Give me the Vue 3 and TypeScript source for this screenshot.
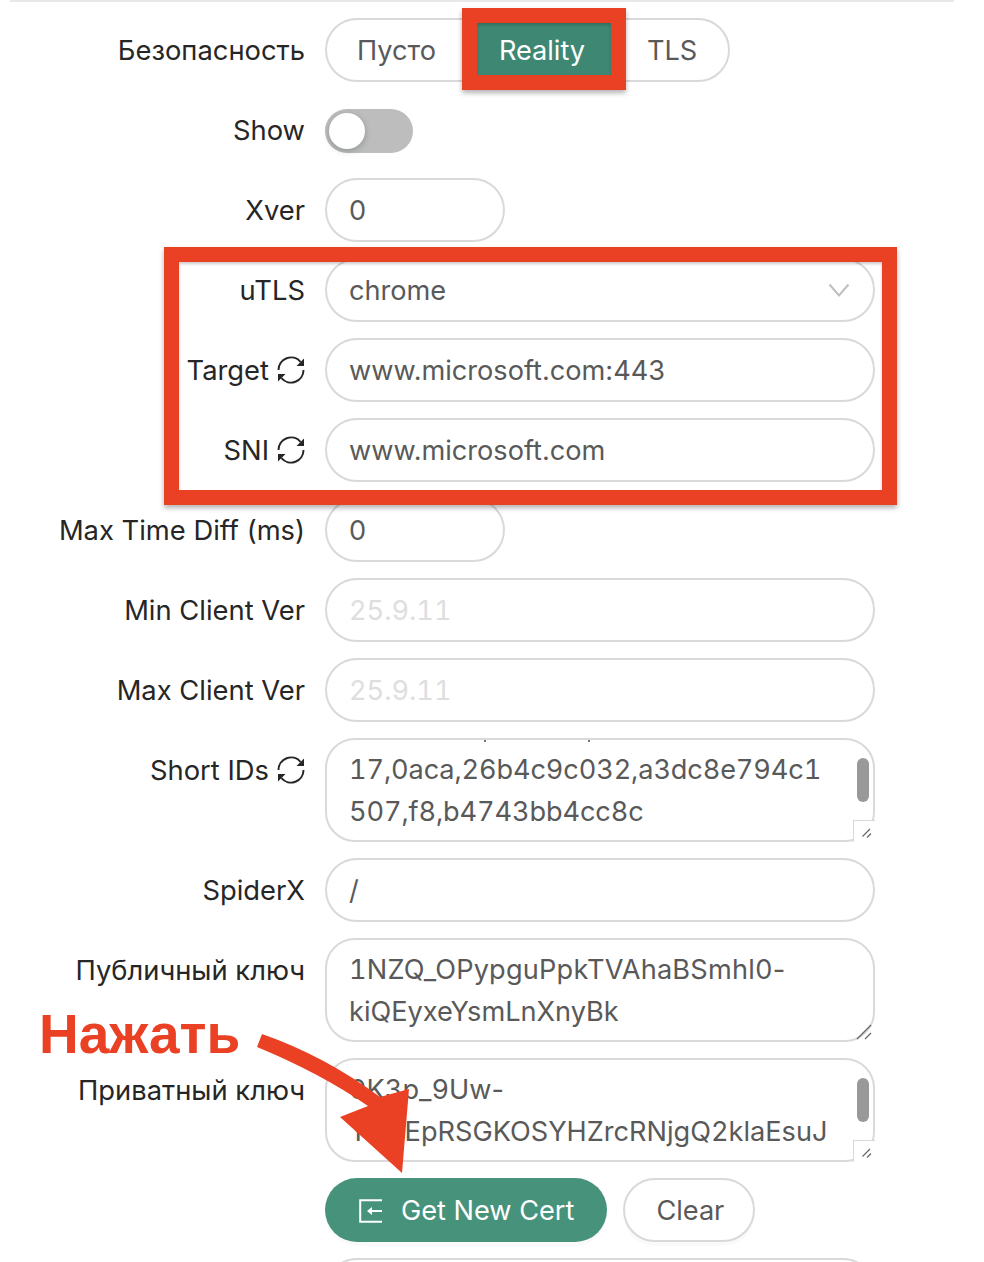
<script setup lang="ts">
const arcs = 'M1.5 14A12.5 12.5 0 0 1 23.5 5.8M26.5 14A12.5 12.5 0 0 1 4.5 22.2'
const heads = 'M27 2.5V10h-7.5zM1 25.5V18h7.5z'
</script>

<template>
  <div class="page">
    <div class="divider"></div>
    <form class="form" @submit.prevent>
      <div class="row">
        <label class="label">Безопасность</label>
        <div class="radio">
          <span class="opt">Пусто</span>
          <span class="opt active">Reality</span>
          <span class="opt">TLS</span>
        </div>
      </div>
      <div class="row switch-row">
        <label class="label">Show</label>
        <span class="switch"><i class="knob"></i></span>
      </div>
      <div class="row">
        <label class="label">Xver</label>
        <div class="field short">0</div>
      </div>
      <div class="row">
        <label class="label">uTLS</label>
        <div class="field select">
          chrome
          <svg class="chev" viewBox="0 0 22 14" width="22" height="14"><path d="M1.5 1.5 11 12.5 20.5 1.5" fill="none" stroke="#bfbfbf" stroke-width="2"/></svg>
        </div>
      </div>
      <div class="row">
        <label class="label">Target
          <svg class="sync" viewBox="0 0 28 28"><path :d="arcs" fill="none" stroke="#262626" stroke-width="2"/><path :d="heads" fill="#262626"/></svg>
        </label>
        <div class="field">www.microsoft.com:443</div>
      </div>
      <div class="row">
        <label class="label">SNI
          <svg class="sync" viewBox="0 0 28 28"><path :d="arcs" fill="none" stroke="#262626" stroke-width="2"/><path :d="heads" fill="#262626"/></svg>
        </label>
        <div class="field">www.microsoft.com</div>
      </div>
      <div class="row">
        <label class="label">Max Time Diff (ms)</label>
        <div class="field short">0</div>
      </div>
      <div class="row">
        <label class="label">Min Client Ver</label>
        <div class="field ph">25.9.11</div>
      </div>
      <div class="row">
        <label class="label">Max Client Ver</label>
        <div class="field ph">25.9.11</div>
      </div>
      <div class="row">
        <label class="label">Short IDs
          <svg class="sync" viewBox="0 0 28 28"><path :d="arcs" fill="none" stroke="#262626" stroke-width="2"/><path :d="heads" fill="#262626"/></svg>
        </label>
        <div class="area scroll">
          <i class="tick tick-a"></i>
          <i class="tick tick-b"></i>
          <div class="line tight">17,0aca,26b4c9c032,a3dc8e794c1</div>
          <div class="line tight">507,f8,b4743bb4cc8c</div>
          <i class="thumb"></i>
          <i class="notch"></i>
          <svg class="grip" viewBox="0 0 10 10" width="10" height="10"><path d="M.5 8.5 8 1M5 9.5l4-4" stroke="#666" stroke-width="1.2"/></svg>
        </div>
      </div>
      <div class="row">
        <label class="label">SpiderX</label>
        <div class="field">/</div>
      </div>
      <div class="row">
        <label class="label">Публичный ключ</label>
        <div class="area">
          <div class="line loose">1NZQ_OPypguPpkTVAhaBSmhl0<span class="dash">-</span></div>
          <div class="line">kiQEyxeYsmLnXnyBk</div>
          <svg class="grip wide" viewBox="0 0 16 16" width="16" height="16"><path d="M1 15 15 1M9 15l6-6" stroke="#666" stroke-width="1.3"/></svg>
        </div>
      </div>
      <div class="row">
        <label class="label">Приватный ключ</label>
        <div class="area scroll">
          <div class="line">0K3p_9Uw<span class="dash">-</span></div>
          <div class="line">YnwEpRSGKOSYHZrcRNjgQ2klaEsuJ</div>
          <i class="thumb"></i>
          <i class="notch"></i>
          <svg class="grip" viewBox="0 0 10 10" width="10" height="10"><path d="M.5 8.5 8 1M5 9.5l4-4" stroke="#666" stroke-width="1.2"/></svg>
        </div>
      </div>
      <div class="row">
        <span></span>
        <div class="actions">
          <button class="btn primary" type="button">
            <svg viewBox="0 0 24 24" width="24" height="24"><path d="M23 1.2H1.2v21.6H23M23 12H10" fill="none" stroke="#fff" stroke-width="2"/><path d="M8 12l5-4v8z" fill="#fff"/></svg>
            Get New Cert
          </button>
          <button class="btn" type="button">Clear</button>
        </div>
      </div>
      <div class="row">
        <span></span>
        <div class="field"></div>
      </div>
    </form>

    <div class="mark mark-radio"></div>
    <div class="mark mark-group"></div>
    <div class="callout">Нажать</div>
    <svg class="arrow" viewBox="0 0 984 1262" width="984" height="1262">
      <path d="M262 1034Q325 1056 380 1097L409 1089 402 1173 340 1117 368 1106Q320 1073 257 1047Z" fill="#ea4125"/>
    </svg>
  </div>
</template>

<style scoped>
.page {
  position: relative;
  width: 984px;
  height: 1262px;
  overflow: hidden;
  background: #fff;
  font-family: Inter, "Noto Sans", sans-serif;
  font-size: 27.15px;
  color: #262626;
}
.divider {
  height: 2px;
  margin: 0 30px 0 10px;
  background: #e8e8e8;
}
.form {
  display: flex;
  flex-direction: column;
  gap: 16px;
  padding-top: 16px;
}
.row {
  display: grid;
  grid-template-columns: 305px 550px;
  column-gap: 20px;
}
.label {
  display: flex;
  justify-content: flex-end;
  align-items: center;
  gap: 8px;
  height: 64px;
  white-space: nowrap;
  font-size: 27.35px;
}
.sync {
  width: 28px;
  height: 28px;
  flex: none;
}
.field {
  position: relative;
  box-sizing: border-box;
  height: 64px;
  padding: 0 22px;
  border: 2px solid #d9d9d9;
  border-radius: 32px;
  line-height: 62px;
  color: #595959;
}
.short {
  width: 180px;
}
.ph {
  color: #dedede;
  font-feature-settings: "tnum";
}
.chev {
  position: absolute;
  right: 23px;
  top: 23px;
}
.radio {
  display: flex;
  width: 405px;
  height: 64px;
  box-sizing: border-box;
  border: 2px solid #d9d9d9;
  border-radius: 32px;
  line-height: 62px;
  color: #595959;
}
.opt {
  padding: 0 30px;
  flex: none;
}
.opt:first-child {
  width: 140px;
  box-sizing: border-box;
}
.opt.active {
  width: 150px;
  box-sizing: border-box;
  margin: -2px 0;
  line-height: 66px;
  text-align: center;
  padding: 0;
  color: #fff;
  background: #3e8873;
}
.switch-row {
  align-items: start;
}
.switch {
  display: block;
  position: relative;
  width: 88px;
  height: 44px;
  margin-top: 11px;
  border-radius: 22px;
  background: #bdbdbd;
}
.knob {
  position: absolute;
  left: 4px;
  top: 4px;
  width: 36px;
  height: 36px;
  border-radius: 50%;
  background: #fff;
  box-shadow: 0 2px 6px rgba(0, 35, 11, 0.25);
}
.area {
  position: relative;
  box-sizing: border-box;
  height: 104px;
  padding: 9px 22px 0;
  border: 2px solid #d9d9d9;
  border-radius: 30px;
  color: #595959;
  line-height: 42px;
  font-feature-settings: "tnum";
}
.line {
  white-space: nowrap;
}
.tight {
  letter-spacing: -0.13px;
}
.loose {
  letter-spacing: 0.2px;
}
.dash {
  font-feature-settings: normal;
}
.tick {
  position: absolute;
  top: 0;
  width: 2px;
  height: 2px;
  background: #777;
}
.tick-a {
  left: 157px;
}
.tick-b {
  left: 261px;
}
.thumb {
  position: absolute;
  right: 4px;
  top: 18px;
  width: 12px;
  height: 44px;
  border-radius: 6px;
  background: #999;
}
.notch {
  position: absolute;
  right: -2px;
  bottom: -2px;
  width: 22px;
  height: 22px;
  box-sizing: border-box;
  border-left: 1px solid #d9d9d9;
  border-top: 1px solid #d9d9d9;
  background: #fff;
}
.grip {
  position: absolute;
  right: 1px;
  bottom: 2px;
}
.grip.wide {
  right: 1px;
  bottom: 0;
}
.actions {
  display: flex;
  gap: 16px;
}
.btn {
  display: flex;
  align-items: center;
  gap: 18px;
  height: 64px;
  padding: 1px 29px 0 31px;
  box-sizing: border-box;
  border: 2px solid #d9d9d9;
  border-radius: 32px;
  background: #fff;
  color: #595959;
  font: inherit;
  box-shadow: 0 4px 0 rgba(0, 0, 0, 0.02);
}
.btn.primary {
  border: 0;
  padding: 1px 33px 0 34px;
  background: #46927b;
  color: #fff;
}
.mark {
  position: absolute;
  box-sizing: border-box;
  border: 15px solid #ea4125;
  box-shadow: 0 3px 5px rgba(0, 0, 0, 0.3), inset 0 2px 3px rgba(0, 0, 0, 0.2);
}
.mark-radio {
  left: 462px;
  top: 8px;
  width: 164px;
  height: 82px;
}
.mark-group {
  left: 164px;
  top: 247px;
  width: 733px;
  height: 258px;
}
.callout {
  position: absolute;
  left: 39px;
  top: 1002px;
  font-family: "Liberation Sans", Arial, sans-serif;
  font-size: 55px;
  font-weight: 700;
  line-height: 64px;
  color: #ea4125;
}
.arrow {
  position: absolute;
  left: 0;
  top: 0;
  pointer-events: none;
}
</style>
